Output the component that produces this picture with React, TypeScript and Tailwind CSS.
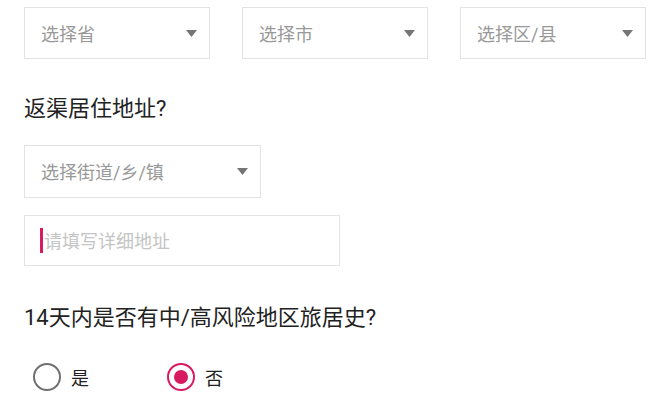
function Caret() {
  return (
    <svg width="11" height="7" viewBox="0 0 11 7" className="shrink-0">
      <path d="M0 0 H11 L5.5 7 Z" fill="#757575" />
    </svg>
  )
}

function Select({ label, className }: { label: string; className: string }) {
  return (
    <div
      className={`flex h-[52px] items-center justify-between border border-[#e3e3e3] bg-white pl-[16px] pr-[12px] ${className}`}
    >
      <span className="mt-[3px] text-[18px] leading-none text-[#999]">{label}</span>
      <Caret />
    </div>
  )
}

function Radio({ label, checked }: { label: string; checked?: boolean }) {
  return (
    <label className="flex items-center gap-[10px]">
      <span
        className={`flex h-[28px] w-[28px] items-center justify-center rounded-full border-[2.5px] ${
          checked ? 'border-[#d81b60]' : 'border-[#707070]'
        }`}
      >
        {checked && <span className="h-[14px] w-[14px] rounded-full bg-[#d81b60]" />}
      </span>
      <span className="mt-[3px] text-[18px] leading-none text-[#222]">{label}</span>
    </label>
  )
}

export default function App() {
  return (
    <div
      className="h-[415px] w-[670px] overflow-hidden bg-white pl-[24px] pt-[7px]"
      style={{ fontFamily: 'Roboto, "Noto Sans CJK SC", sans-serif' }}
    >
      <div className="flex gap-[32px]">
        <Select label="选择省" className="w-[186px]" />
        <Select label="选择市" className="w-[186px]" />
        <Select label="选择区/县" className="w-[186px]" />
      </div>

      <h2 className="mt-[35px] text-[22px] leading-[30px] text-[#222]">返渠居住地址?</h2>

      <Select label="选择街道/乡/镇" className="mt-[21px] h-[53px] w-[237px]" />

      <div className="mt-[17px] flex h-[51px] w-[316px] items-center border border-[#e3e3e3] pl-[15px]">
        <span className="mr-[1px] h-[25px] w-[3px] bg-[#d81b60]" />
        <span className="mt-[3px] text-[18px] leading-none text-[#c4c4c4]">请填写详细地址</span>
      </div>

      <h2 className="mt-[37px] text-[22px] leading-[30px] text-[#222]">14天内是否有中/高风险地区旅居史?</h2>

      <div className="mt-[30px] flex items-center gap-[78px] pl-[9px]">
        <Radio label="是" />
        <Radio label="否" checked />
      </div>
    </div>
  )
}
